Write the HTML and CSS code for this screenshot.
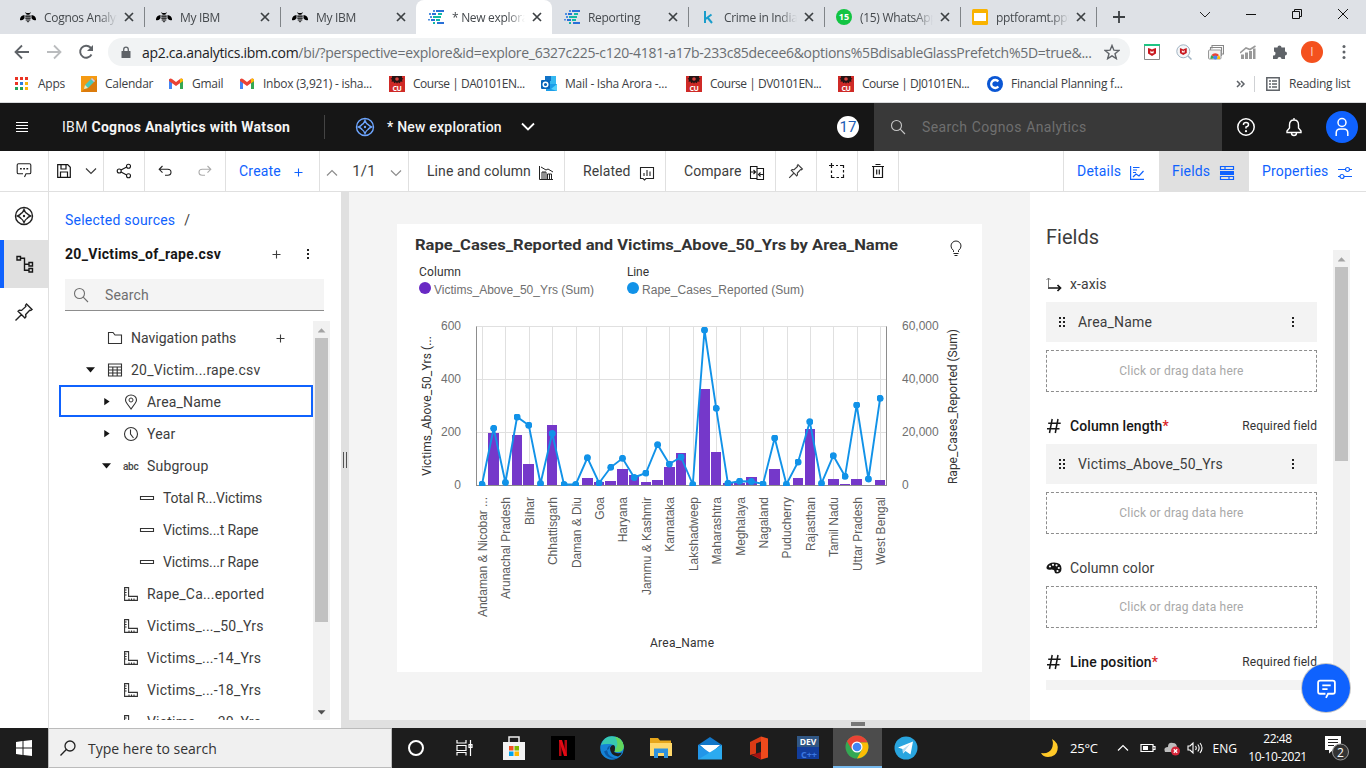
FILE: index.html
```html
<!DOCTYPE html>
<html lang="en">
<head>
<meta charset="utf-8">
<title>New exploration</title>
<link rel="stylesheet" href="styles.css">
</head>
<body>
<svg class="defs" width="0" height="0">
  <defs>
    <symbol id="bee" viewBox="0 0 16 16"><path d="M0 10Q.5 6.500 4.500 6v3.200Q3 11.500 1 11.200T0 10zM16 10q-.5-3.500-4.500-4v3.200q1.500 2.300 3.500 2t1-1.200z"/><path d="M5.500 3.200L6.500 4h3l1-.8.3.8-1.300 1v.8h-3V5L5.200 4zM5.300 6.500h5.400v1.300H5.300zM5.300 8.600h5.400v1.200H5.300zM5.700 10.600h4.600v1H5.700zM6.500 12.300h3L8 13.500z"/></symbol>
    <symbol id="cog" viewBox="0 0 16 16"><path d="M8 1h8v2H8zM4 4h4v2H4zM9 13h7v2H9zM3 10h4v2H3z" fill="#2870d8"/><path d="M10 4h4v2h-4zM5 7h8v2H5zM8 10h4v2H8zM5 13h2v2H5z" fill="#12b9a5"/><path d="M1 4h2v2H1zM2 7h2v2H2zM0 10h2v1.500H0zM5 1h2v2H5z" fill="#4c8ee0"/></symbol>
    <symbol id="x" viewBox="0 0 10 10"><path d="M1 1l8 8M9 1L1 9" fill="none" stroke="#3c4043" stroke-width="1.700"/></symbol>
    <symbol id="gmail" viewBox="0 0 16 16"><path d="M1 3v10h3V6z" fill="#4285f4"/><path d="M15 3v10h-3V6z" fill="#34a853"/><path d="M1 5V3.500Q2.500 1.800 4 3l4 3 4-3q1.500-1.200 3 .5V5L8 10z" fill="#ea4335"/><path d="M12 3q1.500-1.200 3 .5V5l-3 2.300z" fill="#fbbc04"/></symbol>
    <symbol id="cu" viewBox="0 0 16 16"><path d="M0 0h16v16H0z" fill="#cf2a27"/><path d="M3 0h10v2l1.500.8-1.500 1 .5 2-2-.3-.7 1.700L9 6.200 8 7.800 7 6.200 5.200 7.200l-.7-1.700-2 .3.500-2-1.500-1L3 2z" fill="#251414"/><circle cx="8" cy="3" r="1.800" fill="#d8433f"/><text x="8" y="14.700" text-anchor="middle" class="cu-text">CU</text></symbol>
    <symbol id="compass" viewBox="0 0 20 20"><g fill="none" stroke="currentColor" stroke-width="1.400"><circle cx="10" cy="10" r="8.500"/><path d="M10 3.500q1.200 3.300 3 4 1.500 1.500 3.500 2.500-2.500 1-3.500 2.500-1.800 1-3 4-1.200-3-3-4Q6 11 3.500 10 6 9 7 7.500q1.800-.7 3-4z"/></g><circle cx="10" cy="10" r="1.200" fill="currentColor"/></symbol>
    <symbol id="pin" viewBox="0 0 20 20"><path d="M12.500 2l5.500 5.500-1.300 1-1-.3-4 4.300.2 2.300-1 1.200-6.800-6.800 1.200-1 2.300.2 4.300-4-.4-1zM7.800 12.200L1.500 18.500" fill="none" stroke="currentColor" stroke-width="1.400"/></symbol>
    <symbol id="mag" viewBox="0 0 16 16"><g fill="none" stroke="currentColor" stroke-width="1.100"><circle cx="6.500" cy="6.500" r="5"/><path d="M10.200 10.200L15 15"/></g></symbol>
    <symbol id="down" viewBox="0 0 12 12"><path d="M1 3.500l5 5 5-5" fill="none" stroke="currentColor" stroke-width="1.200"/></symbol>
    <symbol id="plus" viewBox="0 0 9 9"><path d="M4.500 .5v8M.5 4.500h8" stroke="currentColor" stroke-width="1.100"/></symbol>
    <symbol id="dots" viewBox="0 0 4 12"><path d="M1 1h2v2H1zM1 5h2v2H1zM1 9h2v2H1z" fill="currentColor"/></symbol>
    <symbol id="ruler" viewBox="0 0 14 14"><path d="M.6.600h4v8.800h8.800v4H.6zM.6 3h2M.6 5.500h2M.6 8h2M5 13.400v-2M7.500 13.400v-2M10 13.400v-2" fill="none" stroke="#333" stroke-width="1.100"/></symbol>
    <symbol id="grip" viewBox="0 0 8 12"><path d="M0 1h2v2H0zM4 1h2v2H4zM0 5h2v2H0zM4 5h2v2H4zM0 9h2v2H0zM4 9h2v2H4z" fill="#222"/></symbol>
    <symbol id="hash" viewBox="0 0 16 16"><path d="M6.200 1l-2.700 14M12 1L9.300 15M2.200 5.300h12.500M1 10.700h12.500" fill="none" stroke="#161616" stroke-width="1.500"/></symbol>
    <symbol id="shield" viewBox="0 0 10 10"><path d="M0 0l3 1 2 1 2-1 3-1v7l-5 3-5-3z" fill="#c8171e"/><path d="M3 3v3.500h4V3L5 5z" fill="#fff"/></symbol>
    <symbol id="value" viewBox="0 0 16 16"><path d="M1.500 6.500h13v3h-13z" fill="none" stroke="#333" stroke-width="1.100"/></symbol>
  </defs>
</svg>

<header class="tabs">
  <div class="tab"><svg class="i16"><use href="#bee"/></svg><span class="tab-title">Cognos Analytics</span><svg class="i10"><use href="#x"/></svg></div>
  <div class="tab"><svg class="i16"><use href="#bee"/></svg><span class="tab-title">My IBM</span><svg class="i10"><use href="#x"/></svg></div>
  <div class="tab last"><svg class="i16"><use href="#bee"/></svg><span class="tab-title">My IBM</span><svg class="i10"><use href="#x"/></svg></div>
  <div class="tab active"><svg class="i16"><use href="#cog"/></svg><span class="tab-title">* New exploration</span><svg class="i10"><use href="#x"/></svg></div>
  <div class="tab"><svg class="i16"><use href="#cog"/></svg><span class="tab-title">Reporting</span><svg class="i10"><use href="#x"/></svg></div>
  <div class="tab"><svg class="i16" viewBox="0 0 16 16"><path d="M5 2v12M11.500 5.500L5.500 10M7.500 8.500l4.500 5.500" fill="none" stroke="#1a9dcb" stroke-width="2"/></svg><span class="tab-title">Crime in India</span><svg class="i10"><use href="#x"/></svg></div>
  <div class="tab"><span class="wa">15</span><span class="tab-title">(15) WhatsApp</span><svg class="i10"><use href="#x"/></svg></div>
  <div class="tab"><svg class="i16" viewBox="0 0 16 16"><rect width="16" height="16" rx="1.500" fill="#f9b300"/><path d="M2 4h12v8H2z" fill="#fff"/></svg><span class="tab-title">pptforamt.pptx</span><svg class="i10"><use href="#x"/></svg></div>
  <svg class="newtab" viewBox="0 0 12 12"><path d="M6 0v12M0 6h12" stroke="#3c4043" stroke-width="1.800"/></svg>
  <div class="wincontrols">
    <svg viewBox="0 0 12 12"><path d="M1 4l5 5 5-5" fill="none" stroke="#222"/></svg>
    <svg viewBox="0 0 12 12"><path d="M1 6.500h10" stroke="#111"/></svg>
    <svg viewBox="0 0 12 12"><path d="M1.500 3.500h7v7h-7zM3.500 3V1.500h7v7H9" fill="none" stroke="#111"/></svg>
    <svg viewBox="0 0 12 12"><path d="M1 1l10 10M11 1L1 11" fill="none" stroke="#111"/></svg>
  </div>
</header>

<div class="address">
  <svg class="nav" viewBox="0 0 16 16"><path d="M15 8H2M8 1.500L1.500 8 8 14.500" fill="none" stroke="#5f6368" stroke-width="1.800"/></svg>
  <svg class="nav" viewBox="0 0 16 16"><path d="M1 8h13M8 1.500L14.500 8 8 14.500" fill="none" stroke="#babcbe" stroke-width="1.800"/></svg>
  <svg class="nav" viewBox="0 0 16 16"><path d="M13.500 10.500a6 6 0 1 1-1-7l1.500 1.500" fill="none" stroke="#5f6368" stroke-width="1.900"/><path d="M15 1v6H9z" fill="#5f6368"/></svg>
  <div class="pill">
    <svg class="lock" viewBox="0 0 10 12"><path d="M1 4.500h8q.5 0 .5.500v6q0 .5-.5.500H1q-.5 0-.5-.5V5q0-.5.5-.5z" fill="#5f6368"/><path d="M2.700 5V3a2.300 2.300 0 0 1 4.600 0v2" fill="none" stroke="#5f6368" stroke-width="1.300"/></svg>
    <span class="url"><b>ap2.ca.analytics.ibm.com</b>/bi/?perspective=explore&amp;id=explore_6327c225-c120-4181-a17b-233c85decee6&amp;options%5BdisableGlassPrefetch%5D=true&amp;...</span>
    <svg class="star" viewBox="0 0 16 16"><path d="M8 1.500l1.900 4.700 5 .3-3.900 3.200 1.300 4.900L8 11.800l-4.300 2.800L5 9.700 1.100 6.500l5-.3z" fill="none" stroke="#5f6368" stroke-width="1.400"/></svg>
  </div>
  <div class="exts">
    <svg viewBox="0 0 16 16"><path d="M.5.500h15v15H.5z" fill="#fff" stroke="#888"/><path d="M0 0h16v2H0z" fill="#1fc483"/><svg x="4" y="4" width="8" height="8"><use href="#shield"/></svg></svg>
    <svg viewBox="0 0 16 16"><circle cx="7.300" cy="7.300" r="6.500" fill="#f4f6f8" stroke="#9fb3c2"/><path d="M12 12l3.500 3.500" stroke="#9fb3c2" stroke-width="1.500"/><svg x="3.500" y="4" width="7.500" height="7"><use href="#shield"/></svg></svg>
    <svg viewBox="0 0 16 16"><path d="M4 4.500V1.500h11.500v8.500H14M2.500 6V3.500h11V12" fill="none" stroke="#888" stroke-width="1.100"/><rect x=".5" y="6" width="12.500" height="9" rx="1" fill="#f1f1f1" stroke="#999"/><path d="M2.500 15a4.500 4.500 0 0 1 1.300-4L7 14z" fill="#34a853"/><path d="M3.500 11a4.700 4.700 0 0 1 7.500 0l-2 2H6z" fill="#ea4335"/><path d="M11 11q1.500 2 1 4H8z" fill="#fbbc04"/><circle cx="7.300" cy="13.500" r="2" fill="#4285f4"/></svg>
    <svg viewBox="0 0 16 16"><path d="M1 10.500h3V15H1zM5 8.500h3V15H5zM9 7h3v8H9zM13 4.500h2.500V15H13z" fill="#999"/><path d="M0 9l6-5 4 1.500 5.500-3.500" fill="none" stroke="#999" stroke-width="1.600"/></svg>
    <svg viewBox="0 0 16 16"><path d="M2 3.500h3.500a2 2 0 1 1 4 0H13V7.500a2 2 0 1 1 0 4V15H9.500a2 2 0 0 0-4 0H1v-3.500a2 2 0 0 0 1-4z" fill="#5f6368"/></svg>
    <span class="avatar">I</span>
    <svg class="kebab" viewBox="0 0 4 16"><circle cx="2" cy="2.500" r="1.500"/><circle cx="2" cy="8" r="1.500"/><circle cx="2" cy="13.500" r="1.500"/></svg>
  </div>
</div>

<nav class="bookmarks">
  <span class="bm w1"><svg class="apps" viewBox="0 0 14 14"><path d="M0 0h3v3H0zM5 0h3v3H5zM10 0h3v3h-3zM0 5h3v3H0z" fill="#ea3323"/><path d="M5 5h3v3H5z" fill="#2a7de1"/><path d="M0 10h3v3H0zM5 10h3v3H5z" fill="#22a45a"/><path d="M10 5h3v3h-3zM10 10h3v3h-3z" fill="#fbb50b"/></svg>Apps</span>
  <span class="bm w2"><svg class="i16" viewBox="0 0 16 16"><path d="M0 0h16v16H0z" fill="#f59a13"/><path d="M0 16L16 3v13z" fill="#db7b0c"/><path d="M3 13l1-4 7-7 3 3-7 7z" fill="#4cc8b8"/><path d="M3 13l1-4 3 3z" fill="#ffe2b0"/><path d="M10 3l1-1 3 3-1 1z" fill="#f5b6d0"/></svg>Calendar</span>
  <span class="bm w3"><svg class="i16"><use href="#gmail"/></svg>Gmail</span>
  <span class="bm w4"><svg class="i16"><use href="#gmail"/></svg>Inbox (3,921) - isha...</span>
  <span class="bm w5 tight"><svg class="i16"><use href="#cu"/></svg>Course | DA0101EN...</span>
  <span class="bm w6"><svg class="i16" viewBox="0 0 16 16"><path d="M4 0h11v10H4z" fill="#35b8f1"/><path d="M4 0h6v5H4z" fill="#1173c7"/><path d="M5 8h11v7H5z" fill="#1c9de8"/><path d="M16 8l-6 5 6 2z" fill="#54d0fa"/><rect y="4" width="9" height="9" rx="1" fill="#0864b9"/><circle cx="4.500" cy="8.500" r="2.300" fill="none" stroke="#fff" stroke-width="1.500"/></svg>Mail - Isha Arora -...</span>
  <span class="bm w7 tight"><svg class="i16"><use href="#cu"/></svg>Course | DV0101EN...</span>
  <span class="bm w8 tight"><svg class="i16"><use href="#cu"/></svg>Course | DJ0101EN...</span>
  <span class="bm w9"><svg class="i16" viewBox="0 0 16 16"><circle cx="8" cy="8" r="8" fill="#0a56d4"/><path d="M11.300 5.500a4 4 0 1 0 0 5" fill="none" stroke="#fff" stroke-width="2.300"/></svg>Financial Planning f...</span>
  <span class="more"><svg class="chev2" viewBox="0 0 10 8"><path d="M1 1l3 3-3 3M5 1l3 3-3 3" fill="none" stroke="#5f6368" stroke-width="1.500"/></svg></span>
  <span class="bm reading"><svg class="readicon" viewBox="0 0 14 14"><path d="M.8.800h12.400v12.400H.8zM3 4h2M3 7h2M3 10h2M6 4h5M6 7h5M6 10h5" fill="none" stroke="#5f6368" stroke-width="1.500"/></svg>Reading list</span>
</nav>

<div class="header">
  <svg class="burger" viewBox="0 0 12 12"><path d="M0 1.500h12M0 4.500h12M0 7.500h12M0 10.500h12" stroke="#fff" stroke-width="1"/></svg>
  <span class="brand">IBM <b>Cognos Analytics with Watson</b></span>
  <span class="vline"></span>
  <svg class="hcompass"><use href="#compass"/></svg>
  <span class="docname">* New exploration</span>
  <svg class="hdown" viewBox="0 0 14 10"><path d="M1 1.500l6 6 6-6" fill="none" stroke="#fff" stroke-width="1.800"/></svg>
  <span class="count">17</span>
  <div class="hsearch"><svg class="i16"><use href="#mag"/></svg>Search Cognos Analytics</div>
  <svg class="hicon help" viewBox="0 0 20 20"><g fill="none" stroke="#fff" stroke-width="1.500"><circle cx="10" cy="10" r="8.200"/><path d="M7.500 8V7.500q0-2 2.500-2t2.500 2-2.500 2.500v1.500"/></g><circle cx="10" cy="14.200" r="1.100" fill="#fff"/></svg>
  <svg class="hicon bell" viewBox="0 0 20 20"><path d="M10 1v2M10 3q-4.500 0-4.500 5v3L3 14v1.500h14V14l-2.500-3V8q0-5-4.500-5zM7.500 16q0 2.500 2.500 2.500t2.500-2.500" fill="none" stroke="#fff" stroke-width="1.400"/></svg>
  <span class="user"><svg viewBox="0 0 18 20"><g fill="none" stroke="#fff" stroke-width="1.500"><circle cx="9" cy="5.500" r="4"/><path d="M3.200 19v-3q0-4 4-4h3.600q4 0 4 4v3"/></g></svg></span>
</div>

<div class="toolbar">
  <div class="cell"><svg class="i16 chat" viewBox="0 0 16 16"><path d="M8.500 15l1.500-3.200h3.500q1.300 0 1.300-1.300V3q0-1.300-1.300-1.300h-11Q1.200 1.700 1.200 3v7.500q0 1.300 1.300 1.300H7" fill="none" stroke="#222" stroke-width="1.100"/><path d="M4 6h1.800v1.500H4zM7.200 6H9v1.500H7.200zM10.400 6h1.800v1.500h-1.800z" fill="#222"/></svg></div>
  <div class="cell save"><svg class="i16" viewBox="0 0 16 16"><path d="M1.700 1.700h10l2.600 2.600v10H1.700zM5 2v4h5V2M4.500 14.500V9h7v5.500" fill="none" stroke="#161616" stroke-width="1.200"/></svg><svg class="i12"><use href="#down"/></svg></div>
  <div class="cell"><svg class="i16" viewBox="0 0 16 16"><g fill="none" stroke="#161616" stroke-width="1.100"><circle cx="3.200" cy="8" r="2"/><circle cx="12.500" cy="3.200" r="2"/><circle cx="12.500" cy="12.800" r="2"/><path d="M5 7.100l5.700-3M5 8.900l5.700 3"/></g></svg></div>
  <div class="cell undo"><svg class="i16" viewBox="0 0 16 16"><path d="M5.500 3L2.200 6.300l3.300 3.300M2.200 6.300h8.500q3.300 0 3.300 3t-3.300 3H8" fill="none" stroke="#222" stroke-width="1.100"/></svg><svg class="i16" viewBox="0 0 16 16"><path d="M10.500 3l3.300 3.300-3.300 3.300M13.800 6.300H5.300Q2 6.300 2 9.300t3.300 3H8" fill="none" stroke="#aaa" stroke-width="1.100"/></svg></div>
  <div class="cell create"><span>Create</span><svg class="i9"><use href="#plus"/></svg></div>
  <div class="cell pager"><svg class="i12 up"><use href="#down"/></svg><span>1/1</span><svg class="i12"><use href="#down"/></svg></div>
  <div class="cell lab"><span>Line and column</span><svg class="i16" viewBox="0 0 16 16"><path d="M1.500 1v13.500H15M4 14V7h4v7M9.500 14V9h4v5M3 2l5 3 2-1 5 3M6 7v7M11.500 9v5" fill="none" stroke="#222" stroke-width="1"/></svg></div>
  <div class="cell lab"><span>Related</span><svg class="i16" viewBox="0 0 16 16"><path d="M1.500 2.500h13v11H7L5.500 15 4 13.500H1.500zM5 11V8M8 11V5M11 11V6.500" fill="none" stroke="#222" stroke-width="1.100"/></svg></div>
  <div class="cell lab"><span>Compare</span><svg class="i16" viewBox="0 0 16 16"><path d="M1.500 1.500h6.500v12H1.500zM8 3.500h6.500v11H8zM2 7h4M4.500 5l2 2-2 2M14 9.500h-3.500M11.500 7.500l-2 2 2 2" fill="none" stroke="#161616" stroke-width="1.100"/></svg></div>
  <div class="cell"><svg class="i16"><use href="#pin"/></svg></div>
  <div class="cell"><svg class="i16" viewBox="0 0 16 16"><path d="M0 2.500h5M2.500 0v5M7 2.500h2M11 2.500h3.500V5M14.500 7v2.500M14.500 11.500v3H12M10 14.500H7.500M5.500 14.500h-3V12M2.500 10V7.500" fill="none" stroke="#161616" stroke-width="1.200"/></svg></div>
  <div class="cell"><svg class="i16" viewBox="0 0 16 16"><path d="M2 3.500h12M5.500 1.500h5M3.500 3.500v11h9v-11M6.700 6.500v5M9.300 6.500v5" fill="none" stroke="#161616" stroke-width="1.200"/></svg></div>
  <div class="cell"></div>
  <div class="cell blue"><span>Details</span><svg class="i16" viewBox="0 0 16 16"><path d="M1.600 1v13.400H15M4 2.500h6.500M4 5h4M4 7.500h3M4 12l3-3 3 2 4.500-5" fill="none" stroke="#0f62fe" stroke-width="1.200"/></svg></div>
  <div class="cell blue on"><span>Fields</span><svg class="i16" viewBox="0 0 16 16"><path d="M1.500 1.500h13v3h-13zM6 1.500v3M1.500 11.500h13v3h-13zM10 11.500v3" fill="none" stroke="#0f62fe" stroke-width="1.200"/><path d="M1 6h14v4H1z" fill="#0f62fe"/></svg></div>
  <div class="cell blue props"><span>Properties</span><svg class="i16" viewBox="0 0 16 16"><g fill="none" stroke="#0f62fe" stroke-width="1.200"><circle cx="10.500" cy="4.500" r="2"/><circle cx="5" cy="11.500" r="2"/><path d="M1 4.500h7.500M12.500 4.500H15M1 11.500h2M7 11.500h8"/></g></svg></div>
</div>

<main class="work">
  <aside class="rail">
    <div class="rb"><svg class="i20"><use href="#compass"/></svg></div>
    <div class="rb on"><svg class="i20" viewBox="0 0 20 20"><path d="M2 2.500h3.500V6H2zM14 8.500h3.500V12H14zM14 14.500h3.500V18H14zM5.500 4.200h4v12H14M9.500 10.200H14" fill="none" stroke="#161616" stroke-width="1.400"/></svg></div>
    <div class="rb"><svg class="i20"><use href="#pin"/></svg></div>
  </aside>
  <section class="sources">
    <div class="crumb"><a>Selected sources</a><span>/</span></div>
    <div class="srctitle"><b>20_Victims_of_rape.csv</b><svg class="i9"><use href="#plus"/></svg><svg class="vd"><use href="#dots"/></svg></div>
    <div class="srcsearch"><svg class="i16"><use href="#mag"/></svg>Search</div>
    <div class="treewrap">
      <div class="tree">
        <div class="row l1"><i></i><svg class="i16" viewBox="0 0 16 16"><path d="M1.500 2.500H6L8 5h6.500v8.500h-13z" fill="none" stroke="#333" stroke-width="1.100"/></svg><span class="navp">Navigation paths</span><svg class="i9 rowplus"><use href="#plus"/></svg></div>
        <div class="row l1"><i class="open"></i><svg class="i16" viewBox="0 0 16 16"><path d="M1.500 2h13v12h-13zM1.500 5h13M1.500 8h13M1.500 11h13M5.800 5v9M10.200 5v9" fill="none" stroke="#333" stroke-width="1.100"/></svg><span>20_Victim...rape.csv</span></div>
        <div class="row l2 sel"><i class="shut"></i><svg class="i16" viewBox="0 0 16 16"><path d="M8 15L4 9.500Q2.500 7.500 2.500 6a5.500 5 0 0 1 11 0q0 1.500-1.500 3.500z" fill="none" stroke="#333" stroke-width="1.100"/><circle cx="8" cy="6" r="2" fill="none" stroke="#333"/></svg><span class="wide">Area_Name</span></div>
        <div class="row l2"><i class="shut"></i><svg class="i16" viewBox="0 0 16 16"><circle cx="8" cy="8" r="6.500" fill="none" stroke="#333" stroke-width="1.100"/><path d="M7.500 3.500V8l3 4" fill="none" stroke="#333" stroke-width="1.100"/></svg><span>Year</span></div>
        <div class="row l2"><i class="open"></i><em>abc</em><span>Subgroup</span></div>
        <div class="row l3"><i></i><svg class="i16"><use href="#value"/></svg><span class="narrow">Total R...Victims</span></div>
        <div class="row l3"><i></i><svg class="i16"><use href="#value"/></svg><span class="narrow">Victims...t Rape</span></div>
        <div class="row l3"><i></i><svg class="i16"><use href="#value"/></svg><span class="narrow">Victims...r Rape</span></div>
        <div class="row l2"><i></i><svg class="i14"><use href="#ruler"/></svg><span>Rape_Ca...eported</span></div>
        <div class="row l2"><i></i><svg class="i14"><use href="#ruler"/></svg><span>Victims_..._50_Yrs</span></div>
        <div class="row l2"><i></i><svg class="i14"><use href="#ruler"/></svg><span>Victims_...-14_Yrs</span></div>
        <div class="row l2"><i></i><svg class="i14"><use href="#ruler"/></svg><span>Victims_...-18_Yrs</span></div>
        <div class="row l2"><i></i><svg class="i14"><use href="#ruler"/></svg><span>Victims_...-30_Yrs</span></div>
      </div>
      <div class="scroll s1"><span class="ar au"></span><span class="thumb"></span><span class="ar ad"></span></div>
    </div>
  </section>
  <div class="vsplit"><span></span></div>
  <div class="center">
    <div class="top">
      <div class="canvas">
        <svg class="card" viewBox="397 224 585 448" width="585" height="448">
          <defs>
            <marker id="dot" viewBox="0 0 8 8" refX="4" refY="4" markerWidth="7" markerHeight="7" markerUnits="userSpaceOnUse"><circle cx="4" cy="4" r="4" fill="#1192e8"/></marker>
            <clipPath id="plot"><path d="M470 310h424v176H470z"/></clipPath>
          </defs>
          <text class="ctitle" x="415" y="250" textLength="483" lengthAdjust="spacingAndGlyphs">Rape_Cases_Reported and Victims_Above_50_Yrs by Area_Name</text>
          <path d="M953.500 252v-1.500q-2.500-2-2.500-4.500a5 5 0 0 1 10 0q0 2.500-2.500 4.500v1.500M953.500 253.500h5M954.500 255.500h3" fill="none" stroke="#222"/>
          <text class="lt" x="419" y="276" textLength="42">Column</text><text class="lt" x="627" y="276" textLength="22">Line</text>
          <circle cx="425" cy="288" r="6" fill="#6929c4"/><circle cx="633" cy="288" r="6" fill="#1192e8"/>
          <text class="ax" x="434" y="294" textLength="160">Victims_Above_50_Yrs (Sum)</text><text class="ax" x="642" y="294" textLength="162">Rape_Cases_Reported (Sum)</text>
          <path d="M482.500 326.500v159M505.500 326.500v159M529.500 326.500v159M552.500 326.500v159M576.500 326.500v159M599.500 326.500v159M622.500 326.500v159M646.500 326.500v159M669.500 326.500v159M693.500 326.500v159M716.500 326.500v159M740.500 326.500v159M763.500 326.500v159M787.500 326.500v159M810.500 326.500v159M833.500 326.500v159M857.500 326.500v159M880.500 326.500v159M476 326.500h411M476 379.500h411M476 432.500h411" fill="none" stroke="#e0e0e0"/>
          <path d="M488 433h11v52.500h-11zM512 435h10v50.500h-10zM523 464h11v21.500h-11zM547 425h10v60.500h-10zM582 478h11v7.500h-11zM594 482h10v3.500h-10zM605 481h11v4.500h-11zM617 469h11v16.500h-11zM629 475h10v10.500h-10zM641 482h10v3.500h-10zM652 480h11v5.500h-11zM664 467h11v18.500h-11zM676 453h10v32.500h-10zM699 389h11v96.500h-11zM711 452h10v33.500h-10zM723 483h10v2.500h-10zM734 483h11v2.500h-11zM746 477h11v8.500h-11zM769 469h11v16.500h-11zM793 478h10v7.500h-10zM805 429h10v56.500h-10zM828 479h11v6.500h-11zM840 484h10v1.500h-10zM851 479h11v6.500h-11zM875 480h10v5.500h-10z" fill="#7538ca"/>
          <path d="M476.500 326.500v159M886.500 326.500v159M476 485.500h411" fill="none" stroke="#8d8d8d"/>
          <g clip-path="url(#plot)"><polyline points="482,484.300 493.700,428.300 505.400,482.500 517.100,417 528.800,425.300 540.500,483.500 552.200,433.500 564,484.500 575.700,484.500 587.400,457.800 599.100,483 610.800,467.300 622.500,458.300 634.200,477.500 645.900,473 657.600,444.700 669.300,464 681,457 692.800,484.500 704.500,330 716.200,408.300 727.900,483.300 739.600,481.200 751.300,481.500 763,484 774.700,438 786.400,484.300 798.100,462 809.800,421.700 821.500,483.300 833.300,455.700 845,476.300 856.700,405 868.400,479 880.100,398.300" fill="none" stroke="#1192e8" stroke-width="1.900" marker-start="url(#dot)" marker-mid="url(#dot)" marker-end="url(#dot)"/></g>
          <g class="ax" text-anchor="end"><text x="461" y="330">600</text><text x="461" y="383">400</text><text x="461" y="436">200</text><text x="461" y="489">0</text></g>
          <g class="ax"><text x="902" y="330">60,000</text><text x="902" y="383">40,000</text><text x="902" y="436">20,000</text><text x="902" y="489">0</text></g>
          <g class="ax xl" text-anchor="end">
            <text transform="translate(487 497) rotate(-90)" textLength="120">Andaman &amp; Nicobar ...</text><text transform="translate(510 497) rotate(-90)" textLength="102">Arunachal Pradesh</text><text transform="translate(534 497) rotate(-90)">Bihar</text><text transform="translate(557 497) rotate(-90)">Chhattisgarh</text><text transform="translate(581 497) rotate(-90)" textLength="71">Daman &amp; Diu</text><text transform="translate(604 497) rotate(-90)">Goa</text><text transform="translate(627 497) rotate(-90)">Haryana</text><text transform="translate(651 497) rotate(-90)" textLength="98">Jammu &amp; Kashmir</text><text transform="translate(674 497) rotate(-90)">Karnataka</text><text transform="translate(698 497) rotate(-90)">Lakshadweep</text><text transform="translate(721 497) rotate(-90)">Maharashtra</text><text transform="translate(745 497) rotate(-90)">Meghalaya</text><text transform="translate(768 497) rotate(-90)">Nagaland</text><text transform="translate(791 497) rotate(-90)">Puducherry</text><text transform="translate(815 497) rotate(-90)">Rajasthan</text><text transform="translate(838 497) rotate(-90)">Tamil Nadu</text><text transform="translate(862 497) rotate(-90)">Uttar Pradesh</text><text transform="translate(885 497) rotate(-90)">West Bengal</text>
          </g>
          <text class="lt" transform="translate(431 476) rotate(-90)" textLength="140">Victims_Above_50_Yrs (...</text>
          <text class="lt" transform="translate(957 484) rotate(-90)" textLength="155">Rape_Cases_Reported (Sum)</text>
          <text class="lt" x="650" y="647" textLength="64">Area_Name</text>
        </svg>
      </div>
      <aside class="fields">
        <h2>Fields</h2>
        <div class="fwrap">
          <div class="flist">
            <div class="fh"><svg viewBox="0 0 16 16"><path d="M2.500 13V2M.5 4l2-2 2 2" fill="none" stroke="#777"/><path d="M2.500 12H14M11.500 9l3 3-3 3" fill="none" stroke="#161616" stroke-width="1.700"/></svg><span>x-axis</span></div>
            <div class="item"><svg class="grip"><use href="#grip"/></svg><span>Area_Name</span><svg class="vd"><use href="#dots"/></svg></div>
            <div class="drop">Click or drag data here</div>
            <div class="fh"><svg><use href="#hash"/></svg><b>Column length<u>*</u></b><small>Required field</small></div>
            <div class="item"><svg class="grip"><use href="#grip"/></svg><span>Victims_Above_50_Yrs</span><svg class="vd"><use href="#dots"/></svg></div>
            <div class="drop">Click or drag data here</div>
            <div class="fh"><svg viewBox="0 0 16 16"><path d="M.5 7Q2 2.500 8 2.500q7.500 0 7.500 6 0 5-5 5-2 0-2-2t-3-2q-5.500 1-5-2.500z" fill="#161616"/><g fill="#fff"><circle cx="4" cy="6.500" r="1.100"/><circle cx="7" cy="4.800" r="1.100"/><circle cx="10.500" cy="5.300" r="1.100"/><circle cx="12.800" cy="8" r="1.100"/><circle cx="11.500" cy="11" r="1.100"/></g></svg><span>Column color</span></div>
            <div class="drop empty">Click or drag data here</div>
            <div class="fh"><svg><use href="#hash"/></svg><b>Line position<u>*</u></b><small>Required field</small></div>
            <div class="item"></div>
          </div>
          <div class="scroll s2"><span class="ar au"></span><span class="thumb"></span></div>
        </div>
        <div class="fab"><svg viewBox="0 0 20 20"><path d="M9.500 19l2-4h4.500q2 0 2-2V4.500q0-2-2-2H4q-2 0-2 2V13q0 2 2 2h5M6 7h8M6 10.500h5" fill="none" stroke="#fff" stroke-width="1.700"/></svg></div>
      </aside>
    </div>
    <div class="hsplit"><span></span></div>
  </div>
</main>

<footer class="taskbar">
  <div class="start"><svg class="i16" viewBox="0 0 16 16"><path d="M0 2l6.500-1v6.500H0zM7.500.900L16 0v7.500H7.500zM0 8.500h6.500V15L0 14zM7.500 8.500H16V16l-8.500-1z" fill="#fff"/></svg></div>
  <div class="tsearch"><svg class="i16" viewBox="0 0 16 16"><g fill="none" stroke="#222" stroke-width="1.300"><circle cx="10" cy="6" r="5"/><path d="M6.300 9.500L.5 15.500"/></g></svg>Type here to search</div>
  <div class="t"><svg viewBox="0 0 24 24"><circle cx="12" cy="12" r="7" fill="none" stroke="#fff" stroke-width="2"/></svg></div>
  <div class="t"><svg viewBox="0 0 24 24"><path d="M4 4v3h9V4M4 19.500v-3h9v3M4 9.500h9v5H4zM17.500 4v16M16 8.500h3v3h-3z" fill="none" stroke="#fff" stroke-width="1.200"/></svg></div>
  <div class="t"><svg viewBox="0 0 24 24"><path d="M1 6h22v18H1z" fill="#f3f3f3"/><path d="M7 6V1h10v5" fill="none" stroke="#eee" stroke-width="1.500"/><path d="M7 10h4.500v4.500H7z" fill="#f25022"/><path d="M12.500 10H17v4.500h-4.500z" fill="#7fba00"/><path d="M7 15.500h4.500V20H7z" fill="#00a4ef"/><path d="M12.500 15.500H17V20h-4.500z" fill="#ffb900"/></svg></div>
  <div class="t"><svg viewBox="0 0 24 24"><path d="M0 0h24v24H0z" fill="#000"/><path d="M8 4h2.500v16H8zM13.500 4H16v16h-2.500z" fill="#b20710"/><path d="M8 4h3l5 16h-3z" fill="#e50914"/></svg></div>
  <div class="t"><svg viewBox="0 0 24 24"><circle cx="12" cy="12" r="11.800" fill="#1583d7"/><path d="M1 9Q4 0 12 .2q11 .3 11.800 10.300Q23.500 16 17 16q-3 0-2.500-1.500Q17 9 10 8 4 7.500 1 9z" fill="#38c9b0"/><path d="M15 .8q8 2 8.800 9.700Q23.500 16 17 16q-3 0-2.500-1.500Q20 8 15 .8z" fill="#62d65c"/><path d="M9 13q0-3 2.500-4Q7 10 7 14q1 8 11 8.500-11 1.500-14-7z" fill="#0c59a4"/><path d="M10 12q1-3 3-3t2 3-1 4q3 2 8 .5-1 3-4 4-8-1-8-8.500z" fill="#1d1d1d"/></svg></div>
  <div class="t"><svg viewBox="0 0 24 24"><path d="M1 2h8l2 2.500h11V20H1z" fill="#e6a61b"/><path d="M1 7h22v13H1z" fill="#ffd86b"/><path d="M5 12.500h14V22h-4v-5H9v5H5z" fill="#2e91dd"/></svg></div>
  <div class="t"><svg viewBox="0 0 24 24"><path d="M0 9l12-8 12 8v14H0z" fill="#1377c8"/><path d="M2 9h20l-10 9z" fill="#fff"/><path d="M0 9l14 9-14 5.500z" fill="#2296e8"/><path d="M24 9L0 23.500h24z" fill="#2cabf0"/></svg></div>
  <div class="t"><svg viewBox="0 0 24 24"><path d="M3 6l11-5.500v5L9 7.500v10L3 19z" fill="#d93b15"/><path d="M14 .5l7 2v19l-7 2-9-4.500h9z" fill="#f04a1c"/><path d="M14 16v7.500L5 19z" fill="#a61111"/></svg></div>
  <div class="t"><svg viewBox="0 0 24 24"><path d="M1 0h22v23H1z" fill="#123d9c"/><path d="M1 0h22v11H1z" fill="#315784"/><text x="12" y="9" text-anchor="middle" class="dev">DEV</text><text x="13" y="21.500" text-anchor="middle" class="cpp">C++</text></svg></div>
  <div class="t on"><svg viewBox="0 0 24 24"><circle cx="12" cy="12" r="11.500" fill="#34a853"/><path d="M2 6.300a11.500 11.500 0 0 1 20 0l.5 1.200H12L7 15z" fill="#ea4335"/><path d="M22.500 7.500A11.500 11.500 0 0 1 12 23.500l5-9L16 7.500z" fill="#fbbc04"/><circle cx="12" cy="12" r="5.500" fill="#fff"/><circle cx="12" cy="12" r="4.300" fill="#4285f4"/></svg></div>
  <div class="t"><svg viewBox="0 0 24 24"><circle cx="12" cy="12" r="11.500" fill="#29a5df"/><path d="M4 11.500L19 5.500l-2.500 13-5-3.500-2.500 2.500-.5-4.500z" fill="#fff"/><path d="M9 13l7-5-5 6.500-2 3z" fill="#b9dcf0"/></svg></div>
  <div class="tray">
    <svg class="moon" viewBox="0 0 20 20"><path d="M12 1q7 4 5.500 11T8 19q-5 0-7-4 8 1 10.500-4T12 1z" fill="#ffc928"/></svg>
    <span class="temp">25°C</span>
    <svg class="trup i12" viewBox="0 0 12 12"><path d="M1 8.500l5-5 5 5" fill="none" stroke="#fff" stroke-width="1.200"/></svg>
    <svg class="i16" viewBox="0 0 16 16"><path d="M1 4.500h12v7H1zM13.500 6.500h1.500v3h-1.500" fill="none" stroke="#fff" stroke-width="1.200"/><path d="M3 6h5v4H3z" fill="#fff"/></svg>
    <svg class="i16" viewBox="0 0 16 16"><path d="M1 12Q-1 7 4 7q0-5 5-4 4 0 4 5v4z" fill="#bdbdbd"/><circle cx="11.500" cy="11" r="4.500" fill="#d6263a"/><path d="M9.800 9.300l3.400 3.400M13.200 9.300l-3.400 3.400" stroke="#fff" stroke-width="1.300"/></svg>
    <svg class="i16" viewBox="0 0 16 16"><path d="M1 6h2l3-3v10l-3-3H1zM8.500 6q1.500 2 0 4M10.800 4.500q2.700 3.500 0 7M13 3q4 5 0 10" fill="none" stroke="#fff" stroke-width="1.100"/></svg>
    <span class="eng">ENG</span>
    <span class="clock"><span>22:48</span><span>10-10-2021</span></span>
    <svg class="notif" viewBox="0 0 26 26"><path d="M1 1h16v14H9l-4 3.500V15H1z" fill="#fff"/><path d="M4 4.500h10M4 7.500h10M4 10.500h6" stroke="#222"/><circle cx="16.500" cy="17" r="8" fill="#333" stroke="#999"/><text x="16.500" y="21.500" text-anchor="middle" class="nn">2</text></svg>
  </div>
</footer>
</body>
</html>
```
FILE: styles.css
```css
* { box-sizing: border-box; }
body { margin: 0; width: 1366px; height: 768px; overflow: hidden; display: flex; flex-direction: column; background: #fff; font-family: "Roboto", sans-serif; font-size: 14px; color: #3d3d3d; }
svg { flex: none; display: block; }
.defs { position: absolute; }
.i16 { width: 16px; height: 16px; }
.i20 { width: 20px; height: 20px; }
.i14 { width: 14px; height: 14px; }
.i12 { width: 12px; height: 12px; }
.i10 { width: 10px; height: 10px; }
.i9 { width: 9px; height: 9px; }

/* browser chrome */
.tabs, .address, .bookmarks, .taskbar { font-family: "Open Sans", sans-serif; flex: none; }
.tabs { height: 34px; background: #dee1e6; display: flex; align-items: center; padding-left: 8px; }
.tab { width: 136px; height: 34px; display: flex; align-items: center; padding-left: 12px; position: relative; font-size: 12px; color: #45494d; }
.tab::after { content: ""; position: absolute; right: -1px; top: 7px; width: 1px; height: 20px; background: #808488; }
.tab.active::after, .tab.last::after { display: none; }
.tab.active { background: #fff; border-radius: 8px 8px 0 0; }
.tab-title { width: 73px; margin: 0 7px 0 8px; overflow: hidden; white-space: nowrap; letter-spacing: -.3px; mask-image: linear-gradient(90deg, #000 75%, transparent 100%); }
.wa { width: 16px; height: 16px; border-radius: 8px; background: #12c443; color: #fff; font-size: 9px; font-weight: 700; text-align: center; line-height: 16px; }
.newtab { width: 12px; height: 12px; margin-left: 17px; }
.wincontrols { margin-left: auto; display: flex; gap: 34px; padding: 0 17px 6px 0; }
.wincontrols svg { width: 12px; height: 12px; }
.address { height: 36px; display: flex; align-items: center; padding-left: 14px; }
.nav { width: 16px; height: 16px; margin-right: 16px; }
.pill { margin-left: -2px; width: 1022px; height: 28px; border-radius: 14px; background: #f1f3f4; display: flex; align-items: center; padding-left: 13px; }
.lock { width: 10px; height: 13px; margin-right: 11px; }
.url { width: 949px; white-space: nowrap; color: #6a6e72; font-size: 14px; letter-spacing: -.29px; }
.url b { font-weight: 400; color: #202124; }
.star { width: 16px; height: 16px; margin-left: 13px; }
.exts { display: flex; align-items: center; margin-left: 14px; gap: 16px; }
.exts > svg { width: 16px; height: 16px; }
.avatar { width: 22px; height: 22px; border-radius: 11px; background: #f4511e; color: #ffd5c8; text-align: center; line-height: 22px; font-size: 12px; margin-left: -3px; }
.exts .kebab { width: 4px; fill: #5f6368; margin-left: 3px; }
.bookmarks { height: 33px; padding: 0 0 5px 15px; display: flex; align-items: center; font-size: 12px; color: #3c4043; border-bottom: 1px solid #d9dbdd; }
.bm { display: flex; align-items: center; gap: 8px; white-space: nowrap; flex: none; letter-spacing: -.25px; }
.tight { letter-spacing: -.48px; }
.apps { width: 14px; height: 14px; margin-right: 1px; }
.w1 { width: 66px; } .w2 { width: 87px; } .w3 { width: 71px; } .w4 { width: 150px; } .w5 { width: 152px; } .w6 { width: 145px; } .w7 { width: 152px; } .w8 { width: 149px; } .w9 { width: 249px; }
.more { width: 19px; height: 16px; display: flex; align-items: center; border-right: 1px solid #cfd1d4; }
.chev2 { width: 10px; height: 8px; }
.reading { margin-left: 11px; gap: 9px; }
.readicon { width: 14px; height: 14px; }
.cu-text { font: 700 7px "Open Sans", sans-serif; fill: #fff; }

/* application header */
.header { height: 48px; flex: none; background: #161616; color: #f4f4f4; display: flex; align-items: center; font-size: 14px; }
.burger { width: 12px; height: 12px; margin: 0 34px 0 16px; }
.brand { width: 262px; white-space: nowrap; letter-spacing: .3px; }
.brand b { font-weight: 700; }
.vline { width: 1px; height: 24px; background: #444; }
.hcompass { width: 20px; height: 20px; color: #6ea6ff; margin: 0 12px 0 30px; }
.docname { width: 134px; font-weight: 500; letter-spacing: .22px; white-space: nowrap; }
.hdown { width: 14px; height: 10px; }
.count { width: 22px; height: 22px; border-radius: 50%; background: #fff; color: #1c5cb5; text-align: center; line-height: 22px; margin-left: 302px; font-size: 15px; }
.hsearch { margin-left: 15px; width: 348px; height: 48px; background: #393939; display: flex; align-items: center; color: #6f6f6f; padding-left: 16px; gap: 16px; letter-spacing: .1px; word-spacing: .5px; white-space: nowrap; letter-spacing: .38px; }
.hsearch svg { color: #c6c6c6; }
.hicon { width: 20px; height: 20px; }
.help { margin-left: 14px; }
.bell { margin-left: 28px; }
.user { width: 32px; height: 32px; border-radius: 50%; background: #0f62fe; margin-left: 22px; display: flex; align-items: center; justify-content: center; }
.user svg { width: 18px; height: 20px; }
.toolbar { height: 41px; flex: none; display: grid; grid-template-columns: 49px 55px 41px 81px 94px 89px 156px 101px 110px 41px 41px 41px 165px 95px 90px 117px; border-bottom: 1px solid #e0e0e0; letter-spacing: .2px; }
.cell { border-right: 1px solid #e0e0e0; display: flex; align-items: center; justify-content: center; white-space: nowrap; min-width: 0; }
.chat { margin-bottom: 2px; }
.save { gap: 13px; justify-content: flex-start; padding-left: 7px; }
.undo { gap: 24px; }
.create { color: #0f62fe; gap: 13px; justify-content: flex-start; padding-left: 13px; }
.create svg { margin-top: 3px; }
.pager { justify-content: space-between; padding: 0 6px; font-size: 15px; }
.pager svg { color: #8d8d8d; margin-top: 3px; }
.pager .up { transform: rotate(180deg); }
.lab { justify-content: space-between; padding: 0 10px 0 18px; letter-spacing: .08px; }
.lab svg { margin-top: 3px; }
.blue { color: #0f62fe; justify-content: space-between; padding: 0 14px 0 13px; border-right: 0; }
.blue svg { margin-top: 3px; }
.props { padding-right: 13px; }
.on { background: #e0e0e0; }

/* workspace */
.work { height: 536px; flex: none; display: flex; }
.rail { width: 49px; border-right: 1px solid #e0e0e0; }
.rb { height: 48px; display: flex; align-items: center; justify-content: center; color: #222; }
.rb.on { border-left: 4px solid #0f62fe; padding-right: 2px; }
.sources { width: 292px; display: flex; flex-direction: column; padding: 12px 0 8px; color: #3d3d3d; }
.crumb { height: 32px; display: flex; align-items: center; gap: 9px; padding-left: 16px; letter-spacing: .22px; }
.crumb a { color: #0f62fe; }
.srctitle { height: 37px; display: flex; align-items: center; padding: 0 0 1px 16px; }
.srctitle b { width: 207px; font-weight: 700; color: #161616; letter-spacing: .32px; white-space: nowrap; }
.vd { width: 4px; height: 12px; color: #222; }
.srctitle .vd { margin-left: 25px; }
.srcsearch { margin: 6px 17px 0 16px; height: 32px; flex: none; background: #f4f4f4; border-bottom: 1px solid #8d8d8d; display: flex; align-items: center; gap: 16px; padding-left: 8px; color: #6f6f6f; letter-spacing: .15px; }
.treewrap { display: flex; margin-top: 10px; height: 399px; overflow: hidden; }
.tree { width: 264px; padding-left: 10px; overflow: hidden; }
.row { height: 32px; display: flex; align-items: center; white-space: nowrap; letter-spacing: .2px; padding-top: 2px; }
.row i { width: 9px; height: 8px; margin-right: 12px; flex: none; }
.row i.open { background: #161616; clip-path: polygon(0 15%, 100% 15%, 50% 80%); }
.row i.shut { background: #161616; clip-path: polygon(25% 0, 85% 45%, 25% 90%); }
.l1 { padding-left: 27px; }
.l2 { padding-left: 43px; }
.l3 { padding-left: 59px; }
.row.sel { border: 2px solid #0f62fe; padding-left: 41px; }
.row span { margin-left: 8px; }
.row .narrow { letter-spacing: -.15px; }
.row .wide { letter-spacing: .2px; }
.row .navp { width: 105px; letter-spacing: 0; }
.row .i14 { margin: 0 1px; }
.row em { width: 16px; font-style: normal; font-size: 10px; font-weight: 500; letter-spacing: -.3px; color: #444; }
.row .rowplus { margin-left: 40px; }
.scroll { width: 17px; background: #f1f1f1; display: flex; flex-direction: column; align-items: center; flex: none; }
.ar { height: 17px; width: 8px; flex: none; }
.au { background: #a3a3a3; clip-path: polygon(0 68%, 50% 42%, 100% 68%); }
.ad { background: #505050; clip-path: polygon(0 42%, 50% 68%, 100% 42%); margin-top: auto; }
.thumb { width: 13px; background: #c1c1c1; }
.s1 .thumb { height: 284px; }
.s2 .thumb { height: 194px; }
.vsplit { width: 8px; background: #e0e0e0; display: flex; align-items: center; justify-content: center; }
.vsplit span { width: 4px; height: 16px; border: solid #525252; border-width: 0 1px; }
.center { width: 1017px; }
.top { display: flex; height: 528px; }
.canvas { width: 681px; background: #f4f4f4; padding: 32px 48px; }
.card { background: #fff; }
.ctitle { font: 700 15.500px "Roboto", sans-serif; fill: #333; }
.lt { font: 400 12px "Roboto", sans-serif; fill: #333; }
.ax { font: 400 12px "Liberation Sans", Arial, sans-serif; fill: #6f6f6f; }
.xl { fill: #5c5c5c; }
.fields { width: 336px; position: relative; padding: 33px 16px 0; color: #3d3d3d; }
.fields h2 { margin: 0 0 1px; height: 24px; line-height: 24px; font-size: 20px; font-weight: 400; letter-spacing: 0; }
.fwrap { display: flex; height: 440px; justify-content: space-between; overflow: hidden; }
.flist { width: 271px; padding-top: 16px; overflow: hidden; }
.fh { height: 36px; display: flex; align-items: center; letter-spacing: .1px; }
.fh > svg { width: 16px; height: 16px; margin-right: 8px; }
.fh b { font-weight: 500; color: #161616; }
.fh u { color: #da1e28; text-decoration: none; }
.fh small { margin-left: auto; font-size: 12px; color: #333; letter-spacing: .1px; }
.item { height: 40px; background: #f3f3f3; display: flex; align-items: center; padding: 0 22px 0 13px; letter-spacing: .2px; }
.grip { width: 8px; height: 12px; margin-right: 11px; }
.item .vd { margin-left: auto; }
.drop { height: 42px; margin: 8px 0 16px; border: 1px dashed #8d8d8d; display: flex; align-items: center; justify-content: center; color: #a8a8a8; font-size: 12px; letter-spacing: .2px; }
.drop.empty { margin-top: 0; }
.fab { position: absolute; left: 272px; top: 472px; width: 48px; height: 48px; border-radius: 50%; background: #0f62fe; display: flex; align-items: center; justify-content: center; box-shadow: 0 0 0 1px #c7c7c7; }
.fab svg { width: 21px; height: 21px; }
.hsplit { height: 8px; background: #e0e0e0; display: flex; align-items: center; }
.hsplit span { width: 14px; height: 4px; background: #777; margin-left: 502px; }

/* desktop taskbar */
.taskbar { height: 40px; background: #1d1d1d; display: flex; color: #fff; }
.start { width: 48px; display: flex; align-items: center; justify-content: center; }
.tsearch { width: 344px; background: #f0f0f0; border: 1px solid #bbb; color: #333; display: flex; align-items: center; padding-left: 11px; gap: 12px; letter-spacing: 0; }
.t { width: 49.100px; margin-left: -.1px; display: flex; align-items: center; justify-content: center; flex: none; }
.t svg { width: 24px; height: 24px; }
.t.on { background: #4c4c4c; border-bottom: 2px solid #76b9ed; }
.dev { font: 700 8.500px "Open Sans", sans-serif; fill: #fff; }
.cpp { font: 700 9px "Open Sans", sans-serif; fill: #3c78e0; }
.tray { margin-left: auto; width: 326px; display: flex; align-items: center; font-size: 12px; flex: none; }
.moon { width: 20px; height: 20px; }
.temp { width: 30px; margin: 0 17px 0 10px; white-space: nowrap; font-size: 13px; letter-spacing: -.2px; }
.trup { margin-right: 11px; }
.tray .i16 { margin-right: 7.500px; }
.eng { width: 24px; margin-left: 2px; }
.clock { width: 64px; margin-left: 9px; display: flex; flex-direction: column; align-items: center; line-height: 18px; letter-spacing: -.4px; white-space: nowrap; }
.notif { width: 26px; height: 26px; margin-left: 14px; }
.nn { font: 12px "Open Sans", sans-serif; fill: #fff; }
```
